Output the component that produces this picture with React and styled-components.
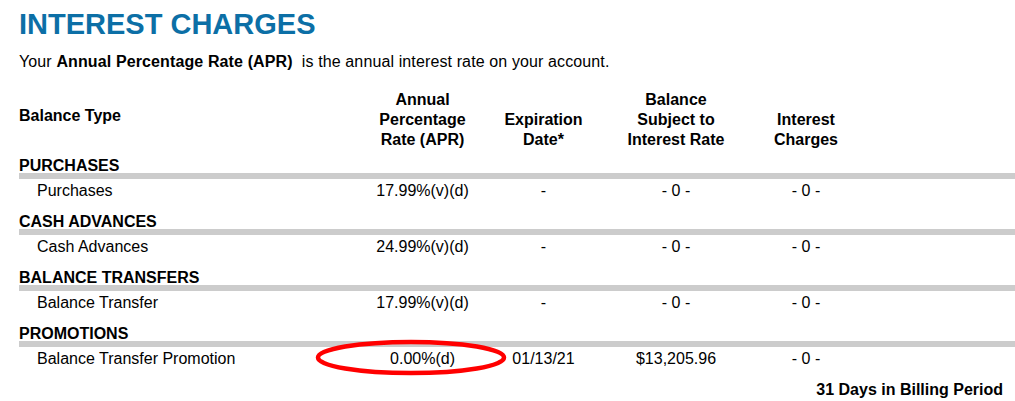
import React from "react";
import styled, { createGlobalStyle } from "styled-components";

const GlobalStyle = createGlobalStyle`
  html, body {
    margin: 0;
    padding: 0;
    background: #ffffff;
  }
  body {
    font-family: "Liberation Sans", Arial, Helvetica, sans-serif;
    color: #000000;
    font-size: 16px;
  }
`;

const COLUMNS = "341px 125px 117px 148px 112px 1fr";

const Page = styled.div`
  padding: 7px 0 0 19px;
  width: 1015px;
  box-sizing: border-box;
  overflow: hidden;
`;

const Title = styled.h1`
  margin: 0;
  font-size: 29px;
  line-height: 34px;
  font-weight: 700;
  color: #0c6fa6;
`;

const Intro = styled.p`
  margin: 12px 0 0;
  font-size: 16px;
  line-height: 18px;
  letter-spacing: 0.12px;
`;

const Table = styled.div`
  margin-top: 19px;
  display: flex;
  flex-direction: column;
`;

const HeaderRow = styled.div`
  display: grid;
  grid-template-columns: ${COLUMNS};
  align-items: end;
  font-weight: 700;
  font-size: 16px;
  line-height: 20px;
  height: 60px;
`;

const TypeHeader = styled.div`
  align-self: center;
  margin-bottom: 9px;
`;

const HeaderCell = styled.div`
  text-align: center;
`;

const Sections = styled.div`
  margin-top: 9px;
  display: flex;
  flex-direction: column;
  gap: 15px;
`;

const Section = styled.section`
  display: flex;
  flex-direction: column;
`;

const SectionTitle = styled.div`
  font-weight: 700;
  font-size: 16px;
  line-height: 14px;
  height: 14px;
`;

const Bar = styled.div`
  height: 6px;
  background: #cccccc;
  margin-right: -20px;
`;

const DataRow = styled.div`
  display: grid;
  grid-template-columns: ${COLUMNS};
  padding-top: 3px;
  font-size: 16px;
  line-height: 18px;
`;

const NameCell = styled.div`
  padding-left: 18px;
`;

const Cell = styled.div`
  text-align: center;
  position: relative;
`;

const Circle = styled.svg`
  position: absolute;
  left: -45px;
  top: -10px;
  width: 192px;
  height: 36px;
  overflow: visible;
  pointer-events: none;
`;

const Footer = styled.div`
  margin-top: 13px;
  padding-right: 12px;
  text-align: right;
  font-weight: 700;
  font-size: 16px;
  line-height: 18px;
`;

const sections = [
  { title: "PURCHASES", name: "Purchases", apr: "17.99%(v)(d)", exp: "-", bal: "- 0 -", chg: "- 0 -" },
  { title: "CASH ADVANCES", name: "Cash Advances", apr: "24.99%(v)(d)", exp: "-", bal: "- 0 -", chg: "- 0 -" },
  { title: "BALANCE TRANSFERS", name: "Balance Transfer", apr: "17.99%(v)(d)", exp: "-", bal: "- 0 -", chg: "- 0 -" },
  { title: "PROMOTIONS", name: "Balance Transfer Promotion", apr: "0.00%(d)", exp: "01/13/21", bal: "$13,205.96", chg: "- 0 -", circled: true },
];

export default function App() {
  return (
    <>
      <GlobalStyle />
      <Page>
        <Title>INTEREST CHARGES</Title>
        <Intro>
          Your <b>Annual Percentage Rate (APR)</b>{"\u00a0 is the annual interest rate on your account."}
        </Intro>
        <Table>
          <HeaderRow>
            <TypeHeader>Balance Type</TypeHeader>
            <HeaderCell>
              Annual
              <br />
              Percentage
              <br />
              Rate (APR)
            </HeaderCell>
            <HeaderCell>
              Expiration
              <br />
              Date*
            </HeaderCell>
            <HeaderCell>
              Balance
              <br />
              Subject to
              <br />
              Interest Rate
            </HeaderCell>
            <HeaderCell>
              Interest
              <br />
              Charges
            </HeaderCell>
            <div />
          </HeaderRow>
          <Sections>
            {sections.map((s) => (
              <Section key={s.title}>
                <SectionTitle>{s.title}</SectionTitle>
                <Bar />
                <DataRow>
                  <NameCell>{s.name}</NameCell>
                  <Cell>
                    {s.apr}
                    {s.circled && (
                      <Circle viewBox="0 0 192 36" aria-hidden="true">
                        <ellipse cx="96" cy="17.5" rx="93" ry="15.5" fill="none" stroke="#ff0000" strokeWidth="4.5" />
                      </Circle>
                    )}
                  </Cell>
                  <Cell>{s.exp}</Cell>
                  <Cell>{s.bal}</Cell>
                  <Cell>{s.chg}</Cell>
                  <div />
                </DataRow>
              </Section>
            ))}
          </Sections>
        </Table>
        <Footer>31 Days in Billing Period</Footer>
      </Page>
    </>
  );
}
